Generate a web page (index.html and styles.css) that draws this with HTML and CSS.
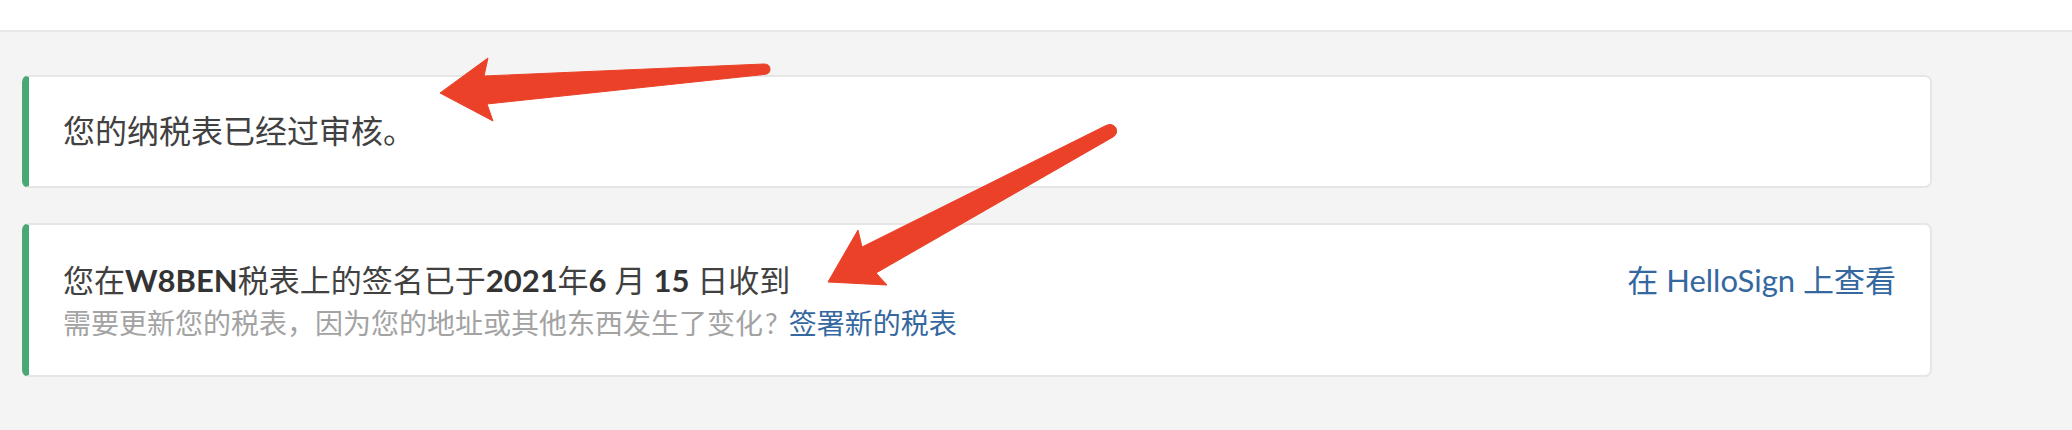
FILE: index.html
```html
<!DOCTYPE html>
<html lang="zh-CN">
<head>
<meta charset="utf-8">
<title>税表</title>
<link rel="stylesheet" href="styles.css">
</head>
<body>
<header class="topbar"></header>
<main class="content">
  <section class="card">
    <p class="title title-lg">您的纳税表已经过审核。</p>
  </section>
  <section class="card card-split">
    <div class="info">
      <p class="title">您在<b>W8BEN</b>税表上的签名已于<b>2021</b>年<b>6</b> 月 <b>15</b> 日收到</p>
      <p class="sub">需要更新您的税表，因为您的地址或其他东西发生了变化<span class="latin q">?</span> <a class="link" href="#">签署新的税表</a></p>
    </div>
    <a class="link view" href="#">在 <span class="latin">HelloSign</span> 上查看</a>
  </section>
</main>
<svg class="annot" width="2072" height="430" viewBox="0 0 2072 430" aria-hidden="true">
  <g fill="#eb4128" stroke="#eb4128" stroke-linejoin="round" stroke-width="1">
    <path d="M440 93 L488 58 L484 76 L764 64 Q770 64 770 69.5 Q770 74 764 74.5 L487 104 L493 121 Z"/>
    <path d="M828 282 L858 230 L862 247 L1105 126 Q1112 122 1116 128 Q1118 134 1113 137 L876 273 L887 285 Z"/>
  </g>
</svg>
</body>
</html>
```
FILE: styles.css
```css
* { box-sizing: border-box; }
html, body { margin: 0; padding: 0; }
body {
  background: #f4f4f4;
  font-family: Lato, "Noto Sans CJK SC", sans-serif;
  color: #333;
  width: 2072px;
  height: 430px;
  position: relative;
  overflow: hidden;
}
.topbar {
  height: 32px;
  background: #fff;
  border-bottom: 2px solid #e8e8e8;
}
.content {
  padding: 43px 140px 0 22px;
  display: flex;
  flex-direction: column;
  gap: 35px;
}
.card {
  background: #fff;
  border: 2px solid #e6e6e6;
  border-left: 7px solid #4aa877;
  border-radius: 7px;
  padding: 36px 34px 37px 34px;
}
.card p { margin: 0; }
.title {
  font-size: 31px;
  line-height: 36px;
  color: #414141;
}
.title-lg { font-size: 32px; }
.title b { font-weight: 700; color: #333; }
.card-split {
  display: flex;
  align-items: flex-start;
  justify-content: space-between;
  padding: 35px 34px 29px 34px;
}
.card-split .title { line-height: 40px; }
.sub {
  font-size: 28px;
  line-height: 46px;
  color: #a3a3a3;
}
.q { margin: 0 4px 0 2px; }
.link {
  color: #34689f;
  text-decoration: none;
}
.view {
  font-size: 31px;
  line-height: 40px;
}
.annot {
  position: absolute;
  left: 0;
  top: 0;
  pointer-events: none;
}
```
